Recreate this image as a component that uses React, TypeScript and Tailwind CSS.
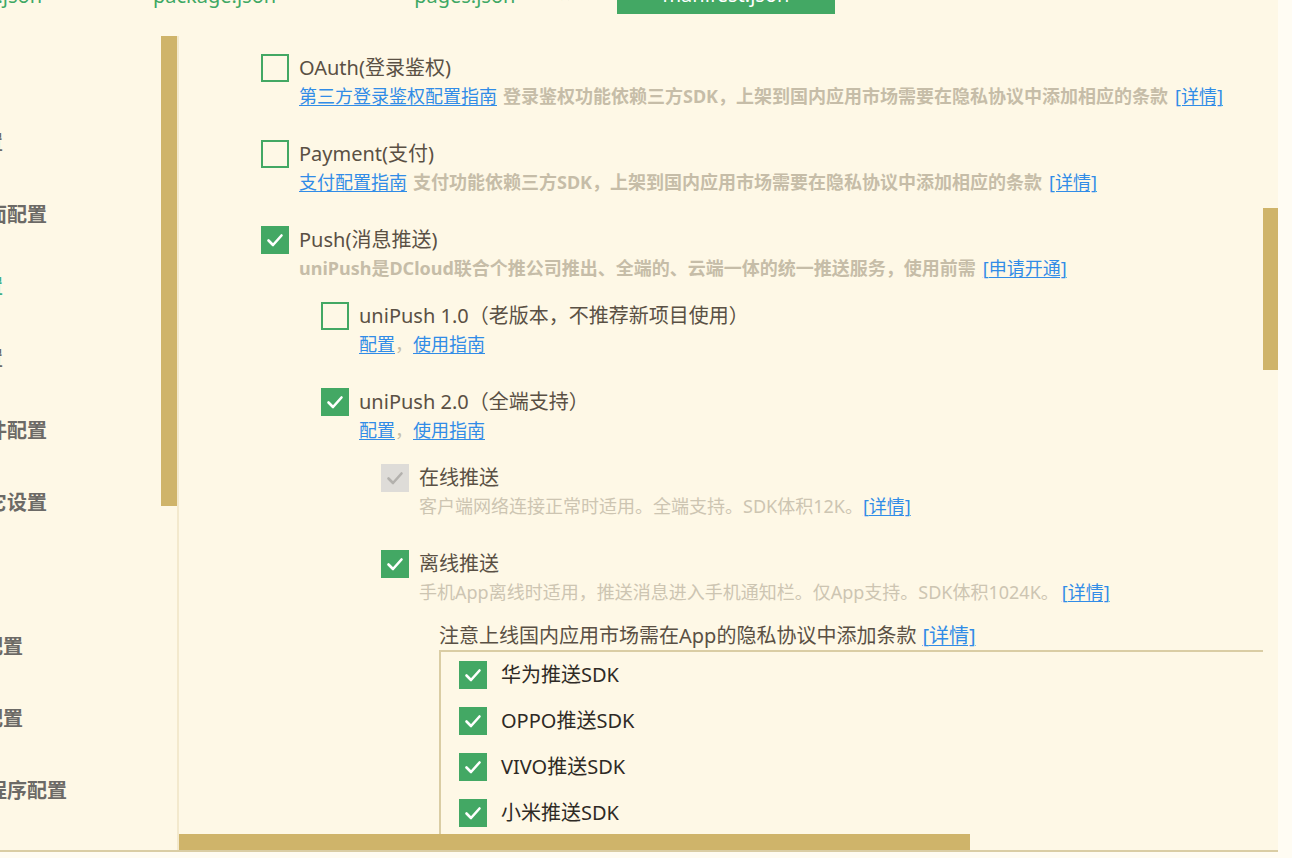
import React from 'react'

type BoxState = 'off' | 'on' | 'disabled'

function CheckBox({ state }: { state: BoxState }) {
  if (state === 'off') {
    return <div className="h-[28px] w-[28px] shrink-0 border-2 border-[#43a864]" />
  }
  const bg = state === 'on' ? 'bg-[#43a864]' : 'bg-[#dedcd8]'
  const stroke = state === 'on' ? '#ffffff' : '#b3b1ad'
  return (
    <div className={`h-[28px] w-[28px] shrink-0 ${bg} flex items-center justify-center`}>
      <svg width="28" height="28" viewBox="0 0 28 28" fill="none">
        <path d="M7.5 14.5 L12 19 L20.5 9.5" stroke={stroke} strokeWidth="2.6" strokeLinecap="round" strokeLinejoin="round" />
      </svg>
    </div>
  )
}

function Link({ children }: { children: React.ReactNode }) {
  return <span className="text-[#318ce7] underline underline-offset-2 decoration-1">{children}</span>
}

function Row({
  state,
  label,
  sub,
}: {
  state: BoxState
  label: string
  sub: React.ReactNode
}) {
  return (
    <div className="flex gap-[10px]">
      <CheckBox state={state} />
      <div className="whitespace-nowrap">
        <div className="text-[20px] leading-[28px] text-[#5a5044]">{label}</div>
        <div className="text-[18px] leading-[28px]">{sub}</div>
      </div>
    </div>
  )
}

const sideItems = [
  { text: 'App图标配置', end: 3 },
  { text: 'App启动界面配置', end: 47 },
  { text: 'App模块配置', end: 3, active: true },
  { text: 'App权限配置', end: 3 },
  { text: 'App原生插件配置', end: 47 },
  { text: 'App常用其它设置', end: 47 },
  { text: 'Web配置', end: 0 },
  { text: '微信小程序配置', end: 23 },
  { text: '百度小程序配置', end: 23 },
  { text: '字节跳动小程序配置', end: 67 },
]

const sdkItems = ['华为推送SDK', 'OPPO推送SDK', 'VIVO推送SDK', '小米推送SDK']

export default function App() {
  return (
    <div className="flex h-[858px] w-[1292px] overflow-hidden bg-[#fef8e6] font-['Noto_Sans','Noto_Sans_CJK_SC',sans-serif]">
      <div className="flex w-[1278px] flex-col">
        {/* Tabs */}
        <div className="flex h-[14px] shrink-0 overflow-hidden text-[20px] leading-[28px] text-[#3fa864]">
          <div className="flex w-[42px] justify-end">
            <span className="mt-[-18px] shrink-0 whitespace-nowrap">config.json</span>
          </div>
          <span className="ml-[111px] mt-[-18px] whitespace-nowrap">package.json</span>
          <span className="ml-[138px] mt-[-18px] whitespace-nowrap">pages.json</span>
          <span className="ml-[44px] mt-[-18px] text-[#57b279]">×</span>
          <div className="ml-[46px] flex w-[218px] justify-center bg-[#43a864] text-white">
            <span className="mt-[-19px] whitespace-nowrap">manifest.json</span>
          </div>
        </div>
        <div className="h-[22px] shrink-0" />

        {/* Body */}
        <div className="flex h-[814px] shrink-0">
          <aside className="w-[161px] shrink-0 overflow-hidden pt-[71px] text-[20px] font-bold text-[#6c6a66]">
            {sideItems.map((item) => (
              <div key={item.text} className="flex h-[72px] items-center">
                <div className="flex justify-end" style={{ width: item.end }}>
                  <span className={`shrink-0 whitespace-nowrap ${item.active ? 'text-[#3fae86]' : ''}`}>
                    {item.text}
                  </span>
                </div>
              </div>
            ))}
          </aside>
          <div className="w-[16px] shrink-0">
            <div className="h-[470px] bg-[#cfb46a]" />
          </div>
          <div className="w-[2px] shrink-0 bg-[#f3e9cd]" />

          <main className="flex w-[1084px] shrink-0 flex-col">
            <div className="h-[798px] overflow-hidden pl-[82px] pt-[18px]">
              <div className="mb-[30px]">
                <Row
                  state="off"
                  label="OAuth(登录鉴权)"
                  sub={
                    <>
                      <Link>第三方登录鉴权配置指南</Link>
                      <span className="ml-[6px] font-bold text-[#c6bda8]">
                        登录鉴权功能依赖三方SDK，上架到国内应用市场需要在隐私协议中添加相应的条款
                      </span>
                      <span className="ml-[7px]">
                        <Link>[详情]</Link>
                      </span>
                    </>
                  }
                />
              </div>
              <div className="mb-[30px]">
                <Row
                  state="off"
                  label="Payment(支付)"
                  sub={
                    <>
                      <Link>支付配置指南</Link>
                      <span className="ml-[6px] font-bold text-[#c6bda8]">
                        支付功能依赖三方SDK，上架到国内应用市场需要在隐私协议中添加相应的条款
                      </span>
                      <span className="ml-[7px]">
                        <Link>[详情]</Link>
                      </span>
                    </>
                  }
                />
              </div>
              <div>
                <Row
                  state="on"
                  label="Push(消息推送)"
                  sub={
                    <>
                      <span className="font-bold text-[#c6bda8]">
                        uniPush是DCloud联合个推公司推出、全端的、云端一体的统一推送服务，使用前需
                      </span>
                      <span className="ml-[7px]">
                        <Link>[申请开通]</Link>
                      </span>
                    </>
                  }
                />
                <div className="ml-[60px] mt-[20px]">
                  <div className="mb-[30px]">
                    <Row
                      state="off"
                      label="uniPush 1.0（老版本，不推荐新项目使用）"
                      sub={
                        <>
                          <Link>配置</Link>
                          <span className="text-[#c6bda8]">，</span>
                          <Link>使用指南</Link>
                        </>
                      }
                    />
                  </div>
                  <Row
                    state="on"
                    label="uniPush 2.0（全端支持）"
                    sub={
                      <>
                        <Link>配置</Link>
                        <span className="text-[#c6bda8]">，</span>
                        <Link>使用指南</Link>
                      </>
                    }
                  />
                  <div className="ml-[60px] mt-[20px]">
                    <div className="mb-[30px]">
                      <Row
                        state="disabled"
                        label="在线推送"
                        sub={
                          <>
                            <span className="text-[#cdc5b2]">客户端网络连接正常时适用。全端支持。SDK体积12K。</span>
                            <Link>[详情]</Link>
                          </>
                        }
                      />
                    </div>
                    <Row
                      state="on"
                      label="离线推送"
                      sub={
                        <>
                          <span className="text-[#cdc5b2]">
                            手机App离线时适用，推送消息进入手机通知栏。仅App支持。SDK体积1024K。
                          </span>
                          <span className="ml-[3px]">
                            <Link>[详情]</Link>
                          </span>
                        </>
                      }
                    />
                    <div className="ml-[58px] mt-[16px]">
                      <div className="whitespace-nowrap text-[20px] leading-[28px] text-[#5a5044]">
                        注意上线国内应用市场需在App的隐私协议中添加条款
                        <span className="ml-[6px]">
                          <Link>[详情]</Link>
                        </span>
                      </div>
                      <div className="flex w-[1000px] flex-col gap-[18px] border-l-2 border-t-2 border-[#dacda4] pl-[18px] pt-[9px] pb-[10px]">
                        {sdkItems.map((s) => (
                          <div key={s} className="flex h-[28px] items-center gap-[14px]">
                            <CheckBox state="on" />
                            <span className="whitespace-nowrap text-[20px] leading-[28px] text-[#2e2a25]">{s}</span>
                          </div>
                        ))}
                      </div>
                    </div>
                  </div>
                </div>
              </div>
            </div>
            <div className="h-[16px] shrink-0">
              <div className="h-full w-[791px] bg-[#cfb46a]" />
            </div>
          </main>

          <div className="w-[15px] shrink-0 pt-[172px]">
            <div className="h-[162px] bg-[#cfb46a]" />
          </div>
        </div>

        <div className="h-[2px] shrink-0 bg-[#dacda4]" />
        <div className="flex-1 bg-[#fffcf3]" />
      </div>
      <div className="w-[14px] shrink-0 bg-[#fffcf3]" />
    </div>
  )
}
